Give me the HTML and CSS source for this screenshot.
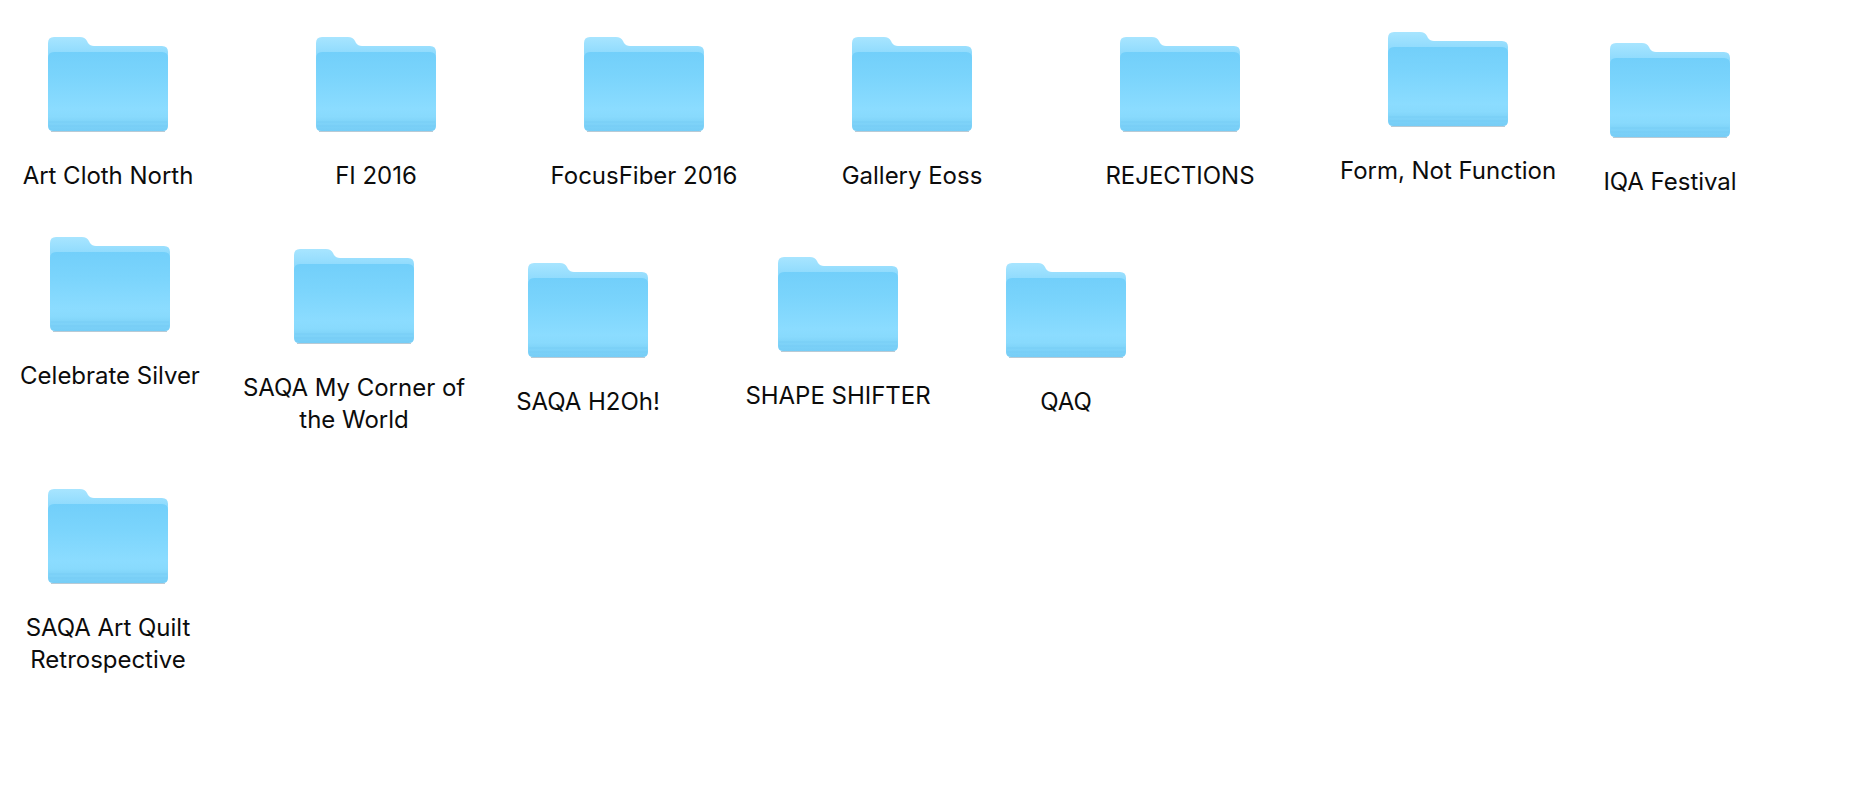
FILE: index.html
```html
<!DOCTYPE html>
<html lang="en">
<head>
    <meta charset="UTF-8">
    <title>Folders</title>
    <link rel="stylesheet" href="styles.css">
</head>
<body>
    <svg class="defs" width="0" height="0" aria-hidden="true">
        <defs>
            <linearGradient id="backFill" gradientUnits="userSpaceOnUse" x1="0" y1="0" x2="0" y2="16">
                <stop offset="0" stop-color="#a8e5ff"/>
                <stop offset="1" stop-color="#90dbfd"/>
            </linearGradient>
            <linearGradient id="frontFill" x1="0" y1="0" x2="0" y2="1">
                <stop offset="0" stop-color="#72cffa"/>
                <stop offset="0.3" stop-color="#7ad4fc"/>
                <stop offset="0.72" stop-color="#8bdcff"/>
                <stop offset="0.82" stop-color="#88dafd"/>
                <stop offset="0.88" stop-color="#80d4f9"/>
                <stop offset="1" stop-color="#76cdf6"/>
            </linearGradient>
            <symbol id="folder" viewBox="0 0 120 99">
                <path d="M0 6Q0 0 6 0H32Q37 0 39 4L40 6Q42 9 46 9H114Q120 9 120 15V40H0Z" fill="url(#backFill)"/>
                <path d="M0 21Q0 15 6 15H114Q120 15 120 21V89Q120 94 115 94H5Q0 94 0 89Z" fill="url(#frontFill)"/>
                <path d="M1 85H119M1 89H119" stroke="#6cc5f1" stroke-width="1" opacity="0.4"/>
                <path d="M3 94.5H117" stroke="#7f9fb2" stroke-width="1" opacity="0.55"/>
            </symbol>
        </defs>
    </svg>

    <main class="desktop">
        <div class="item art-cloth">
            <svg class="folder"><use href="#folder"/></svg>
            <p class="name">Art Cloth North</p>
        </div>
        <div class="item fi-2016">
            <svg class="folder"><use href="#folder"/></svg>
            <p class="name">FI 2016</p>
        </div>
        <div class="item focusfiber">
            <svg class="folder"><use href="#folder"/></svg>
            <p class="name">FocusFiber 2016</p>
        </div>
        <div class="item gallery-eoss">
            <svg class="folder"><use href="#folder"/></svg>
            <p class="name">Gallery Eoss</p>
        </div>
        <div class="item rejections">
            <svg class="folder"><use href="#folder"/></svg>
            <p class="name">REJECTIONS</p>
        </div>
        <div class="item form-not">
            <svg class="folder"><use href="#folder"/></svg>
            <p class="name">Form, Not Function</p>
        </div>
        <div class="item iqa">
            <svg class="folder"><use href="#folder"/></svg>
            <p class="name">IQA Festival</p>
        </div>
        <div class="item celebrate">
            <svg class="folder"><use href="#folder"/></svg>
            <p class="name">Celebrate Silver</p>
        </div>
        <div class="item my-corner">
            <svg class="folder"><use href="#folder"/></svg>
            <p class="name">SAQA My Corner of the World</p>
        </div>
        <div class="item h2oh">
            <svg class="folder"><use href="#folder"/></svg>
            <p class="name">SAQA H2Oh!</p>
        </div>
        <div class="item shape-shifter">
            <svg class="folder"><use href="#folder"/></svg>
            <p class="name">SHAPE SHIFTER</p>
        </div>
        <div class="item qaq">
            <svg class="folder"><use href="#folder"/></svg>
            <p class="name">QAQ</p>
        </div>
        <div class="item retrospective">
            <svg class="folder"><use href="#folder"/></svg>
            <p class="name">SAQA Art Quilt Retrospective</p>
        </div>
    </main>
</body>
</html>
```

FILE: styles.css
```css
* {
    margin: 0;
    padding: 0;
    box-sizing: border-box;
}

body {
    background: #fff;
    color: #0c0c0c;
    font-family: Inter, "Liberation Sans", Arial, sans-serif;
    height: 804px;
    overflow: hidden;
}

.defs {
    display: block;
    height: 0;
}

.desktop {
    position: relative;
    height: 804px;
}

/* folders sit wherever they were dragged, so each has its own spot */
.item {
    position: absolute;
    width: 230px;
    display: flex;
    flex-direction: column;
    align-items: center;
}

.folder {
    width: 120px;
    height: 99px;
    margin-bottom: 24px;
    filter: blur(0.5px);
}

.name {
    font-size: 24px;
    line-height: 32px;
    text-align: center;
    letter-spacing: -0.02px;
}

.art-cloth { left: -7px; top: 37px; }
.fi-2016 { left: 261px; top: 37px; }
.focusfiber { left: 529px; top: 37px; }
.gallery-eoss { left: 797px; top: 37px; }
.rejections { left: 1065px; top: 37px; }
.form-not { left: 1333px; top: 32px; }
.iqa { left: 1555px; top: 43px; }

.celebrate { left: -5px; top: 237px; }
.my-corner { left: 239px; top: 249px; }
.h2oh { left: 473px; top: 263px; }
.shape-shifter { left: 723px; top: 257px; }
.qaq { left: 951px; top: 263px; }

.retrospective { left: -7px; top: 489px; }
```
